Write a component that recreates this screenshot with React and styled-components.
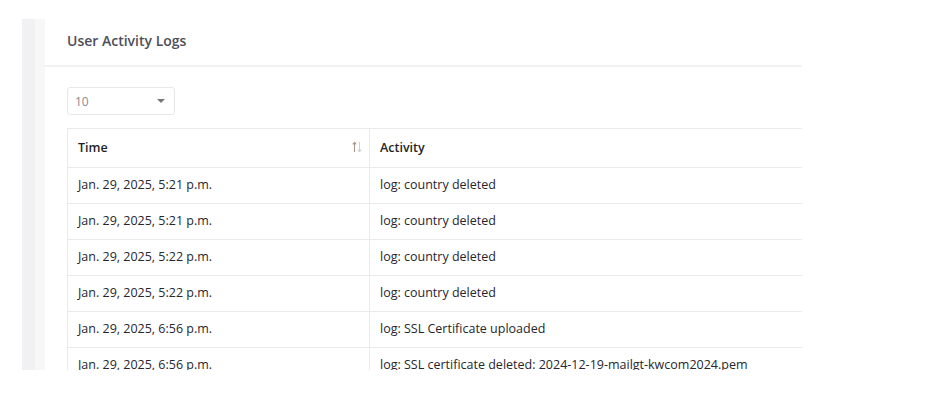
import styled, { createGlobalStyle } from 'styled-components';

const GlobalStyle = createGlobalStyle`
  html, body {
    margin: 0;
    padding: 0;
    background: #fff;
  }
  body {
    font-family: 'Open Sans', 'Noto Sans', sans-serif;
    -webkit-font-smoothing: antialiased;
  }
`;

const logs = [
  { time: 'Jan. 29, 2025, 5:21 p.m.', activity: 'log: country deleted' },
  { time: 'Jan. 29, 2025, 5:21 p.m.', activity: 'log: country deleted' },
  { time: 'Jan. 29, 2025, 5:22 p.m.', activity: 'log: country deleted' },
  { time: 'Jan. 29, 2025, 5:22 p.m.', activity: 'log: country deleted' },
  { time: 'Jan. 29, 2025, 6:56 p.m.', activity: 'log: SSL Certificate uploaded' },
  { time: 'Jan. 29, 2025, 6:56 p.m.', activity: 'log: SSL certificate deleted: 2024-12-19-mailgt-kwcom2024.pem' },
];

const Frame = styled.div`
  margin: 19px 0 0 22px;
  width: 780px;
  height: 351px;
  overflow: hidden;
  display: flex;
  background: #f3f3f5;
`;

const SideStrip = styled.div`
  flex: 0 0 23px;
  background: linear-gradient(to right, #f1f1f3 0, #f1f1f3 13px, #f7f7f8 13px);
`;

const Card = styled.section`
  flex: 0 0 900px;
  background: #fff;
`;

const CardHeader = styled.header`
  height: 48px;
  box-sizing: border-box;
  display: flex;
  align-items: center;
  padding: 0 22px 3px;
  border-bottom: 2px solid #f1f1f4;
`;

const Title = styled.h2`
  margin: 0;
  font-size: 14px;
  font-weight: 600;
  color: #4e4e5a;
`;

const CardBody = styled.div`
  padding: 20px 22px;
`;

const PageSize = styled.div`
  width: 108px;
  height: 28px;
  box-sizing: border-box;
  border: 1px solid #e8e8ec;
  border-radius: 3px;
  display: flex;
  align-items: center;
  justify-content: space-between;
  padding: 0 9px 0 7px;
  font-size: 12px;
  color: #8a8a95;
`;

const Caret = styled.span`
  width: 0;
  height: 0;
  border-left: 4px solid transparent;
  border-right: 4px solid transparent;
  border-top: 4px solid #777;
`;

const Table = styled.table`
  margin-top: 13px;
  width: 856px;
  border-collapse: collapse;
  font-size: 12.5px;
  font-weight: 500;
  color: #26262e;
`;

const Th = styled.th`
  height: 36px;
  padding: 0 6px 2px 10px;
  text-align: left;
  font-weight: 600;
  color: #1f1f26;
  border: 1px solid #e9e9ee;
  width: ${(p) => p.$width || 'auto'};
`;

const ThInner = styled.div`
  display: flex;
  align-items: center;
  justify-content: space-between;
`;

const Td = styled.td`
  height: 33px;
  padding: 0 10px 2px;
  border: 1px solid #e9e9ee;
  white-space: nowrap;
`;

function SortIcon() {
  return (
    <svg width="11" height="12" viewBox="0 0 11 12" fill="none">
      <path d="M2.5 11V1.5M0.8 3.4L2.5 1.3L4.2 3.4" stroke="#a89888" strokeWidth="1.1" />
      <path d="M7.5 1V10.5M5.8 8.6L7.5 10.7L9.2 8.6" stroke="#cdd0d8" strokeWidth="1.1" />
    </svg>
  );
}

export default function App() {
  return (
    <>
      <GlobalStyle />
      <Frame>
        <SideStrip />
        <Card>
          <CardHeader>
            <Title>User Activity Logs</Title>
          </CardHeader>
          <CardBody>
            <PageSize>
              <span>10</span>
              <Caret />
            </PageSize>
            <Table>
              <thead>
                <tr>
                  <Th $width="285px">
                    <ThInner>
                      Time
                      <SortIcon />
                    </ThInner>
                  </Th>
                  <Th>Activity</Th>
                </tr>
              </thead>
              <tbody>
                {logs.map((log, index) => (
                  <tr key={index}>
                    <Td>{log.time}</Td>
                    <Td>{log.activity}</Td>
                  </tr>
                ))}
              </tbody>
            </Table>
          </CardBody>
        </Card>
      </Frame>
    </>
  );
}
